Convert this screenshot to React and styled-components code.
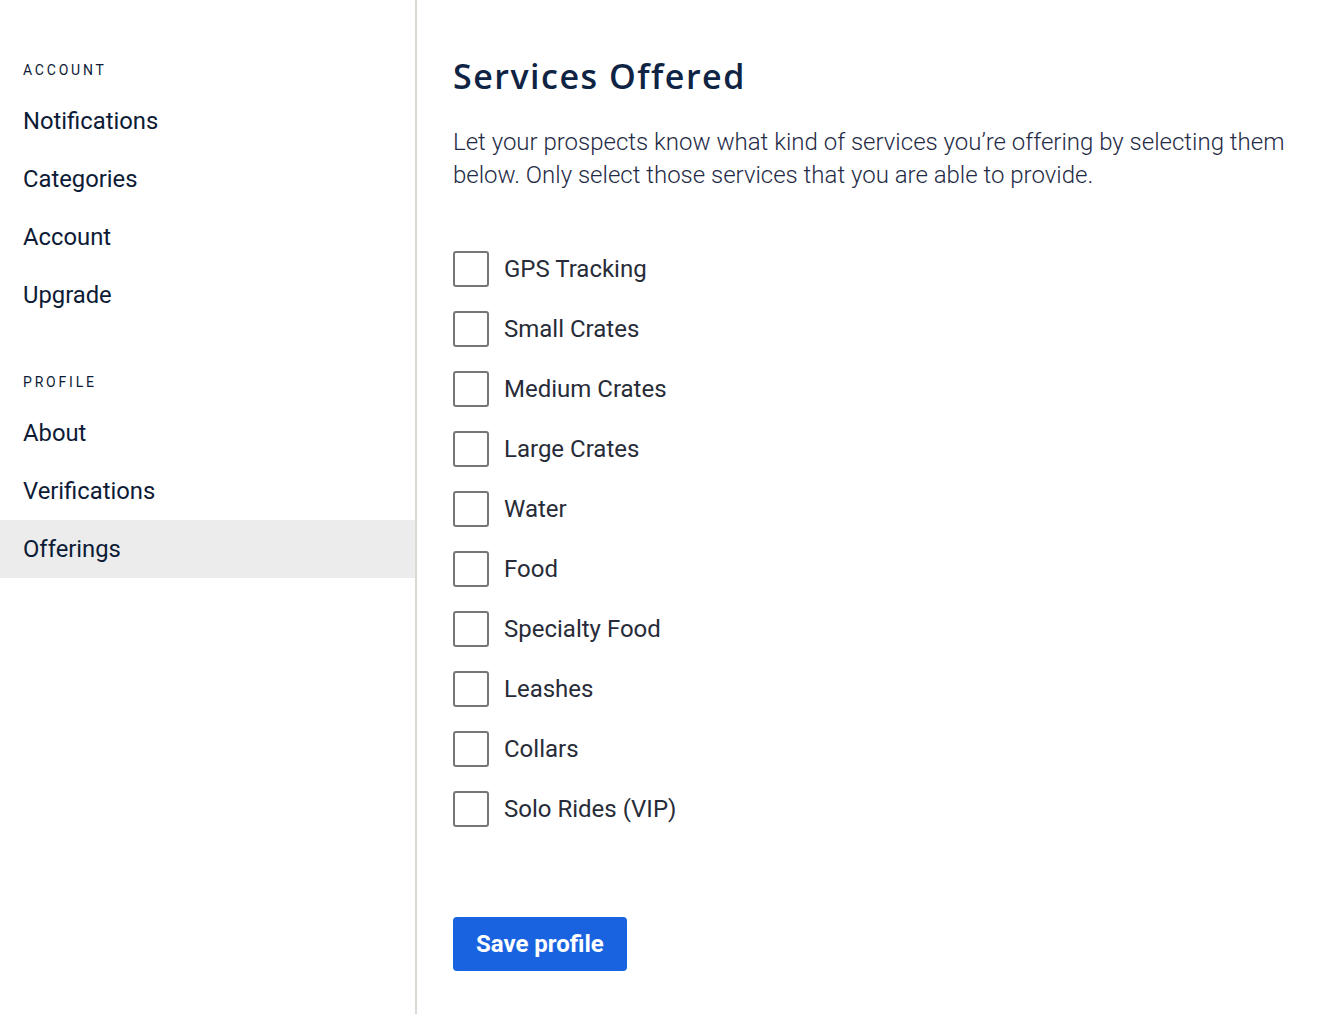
import React from "react";
import styled, { createGlobalStyle } from "styled-components";

const Global = createGlobalStyle`
  html, body { margin: 0; padding: 0; background: #fff; }
  body { font-family: Roboto, "Liberation Sans", sans-serif; }
  * { box-sizing: border-box; }
`;

const Page = styled.div`
  display: flex;
  min-height: 1014px;
`;

const Sidebar = styled.nav`
  width: 417px;
  flex-shrink: 0;
  border-right: 2px solid #dcd9d3;
  padding-top: 60px;
`;

const SectionLabel = styled.div`
  height: 20px;
  line-height: 20px;
  padding-left: 23px;
  font-size: 14px;
  letter-spacing: 2.8px;
  color: #0d1b36;
  margin-top: ${(p) => (p.$first ? "0" : "48px")};
  margin-bottom: 12px;
`;

const NavItem = styled.a`
  display: flex;
  align-items: center;
  height: 58px;
  padding-left: 23px;
  font-size: 23.8px;
  color: #0d1b36;
  text-decoration: none;
  background: ${(p) => (p.$active ? "#ececec" : "transparent")};
`;

const Main = styled.main`
  flex: 1;
  padding: 52px 0 0 36px;
`;

const Title = styled.h1`
  margin: 0;
  font-family: "Open Sans", "Liberation Sans", sans-serif;
  font-weight: 600;
  font-size: 34px;
  line-height: 48px;
  letter-spacing: 1.5px;
  color: #0f2444;
`;

const Intro = styled.p`
  margin: 26px 0 0;
  width: 850px;
  font-size: 24px;
  font-weight: 300;
  line-height: 33px;
  color: #1f2b46;
`;

const List = styled.div`
  margin-top: 47px;
  display: flex;
  flex-direction: column;
`;

const Row = styled.label`
  display: flex;
  align-items: center;
  height: 60px;
  gap: 15px;
  cursor: pointer;
`;

const Box = styled.input.attrs({ type: "checkbox" })`
  appearance: none;
  margin: 0;
  width: 36px;
  height: 36px;
  border: 2px solid #767676;
  border-radius: 3px;
  background: #fff;
`;

const RowText = styled.span`
  font-size: 24px;
  color: #272c38;
`;

const SaveButton = styled.button`
  margin-top: 78px;
  height: 54px;
  padding: 0 23px;
  border: none;
  border-radius: 4px;
  background: #1a63e0;
  color: #fff;
  font-family: Roboto, "Liberation Sans", sans-serif;
  font-size: 24px;
  font-weight: 700;
  cursor: pointer;
`;

const accountLinks = ["Notifications", "Categories", "Account", "Upgrade"];
const profileLinks = ["About", "Verifications", "Offerings"];
const services = [
  "GPS Tracking",
  "Small Crates",
  "Medium Crates",
  "Large Crates",
  "Water",
  "Food",
  "Specialty Food",
  "Leashes",
  "Collars",
  "Solo Rides (VIP)",
];

export default function App() {
  return (
    <>
      <Global />
      <Page>
        <Sidebar>
          <SectionLabel $first>ACCOUNT</SectionLabel>
          {accountLinks.map((l) => (
            <NavItem key={l} href="#">{l}</NavItem>
          ))}
          <SectionLabel>PROFILE</SectionLabel>
          {profileLinks.map((l) => (
            <NavItem key={l} href="#" $active={l === "Offerings"}>{l}</NavItem>
          ))}
        </Sidebar>
        <Main>
          <Title>Services Offered</Title>
          <Intro>
            Let your prospects know what kind of services you’re offering by selecting them
            below. Only select those services that you are able to provide.
          </Intro>
          <List>
            {services.map((s) => (
              <Row key={s}>
                <Box />
                <RowText>{s}</RowText>
              </Row>
            ))}
          </List>
          <SaveButton>Save profile</SaveButton>
        </Main>
      </Page>
    </>
  );
}
